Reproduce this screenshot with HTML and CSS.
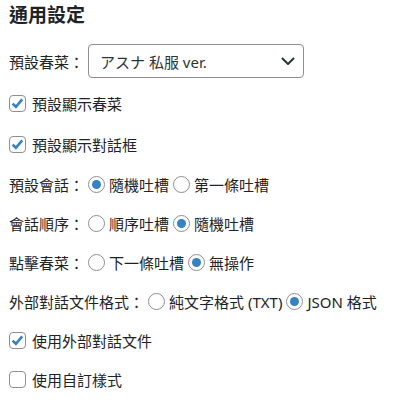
FILE: index.html
```html
<!DOCTYPE html>
<html lang="zh-Hant">
<head>
  <meta charset="UTF-8">
  <title>通用設定</title>
  <link rel="stylesheet" href="styles.css">
</head>
<body>

  <h2>通用設定</h2>

  <div class="fila fila-select">
    <span class="etiqueta">預設春菜：</span>
    <div class="select">
      <span>アスナ 私服 ver.</span>
      <svg class="flecha" width="14" height="8" viewBox="0 0 14 8"><polyline points="1,1 7,7 13,1" fill="none" stroke="#2c3338" stroke-width="2"/></svg>
    </div>
  </div>

  <div class="fila alta">
    <span class="check on"><svg width="17" height="17" viewBox="0 0 17 17"><polyline points="3.6,8.6 6.9,11.8 13.2,4.4" fill="none" stroke="#3582c4" stroke-width="2.6"/></svg></span>
    <span>預設顯示春菜</span>
  </div>

  <div class="fila alta">
    <span class="check on"><svg width="17" height="17" viewBox="0 0 17 17"><polyline points="3.6,8.6 6.9,11.8 13.2,4.4" fill="none" stroke="#3582c4" stroke-width="2.6"/></svg></span>
    <span>預設顯示對話框</span>
  </div>

  <div class="fila">
    <span class="etiqueta">預設會話：</span>
    <span class="radio on"></span><span class="opcion">隨機吐槽</span>
    <span class="radio"></span><span class="opcion">第一條吐槽</span>
  </div>

  <div class="fila">
    <span class="etiqueta">會話順序：</span>
    <span class="radio"></span><span class="opcion">順序吐槽</span>
    <span class="radio on"></span><span class="opcion">隨機吐槽</span>
  </div>

  <div class="fila">
    <span class="etiqueta">點擊春菜：</span>
    <span class="radio"></span><span class="opcion">下一條吐槽</span>
    <span class="radio on"></span><span class="opcion">無操作</span>
  </div>

  <div class="fila">
    <span class="etiqueta">外部對話文件格式：</span>
    <span class="radio"></span><span class="opcion">純文字格式 (TXT)</span>
    <span class="radio on"></span><span class="opcion">JSON 格式</span>
  </div>

  <div class="fila">
    <span class="check on"><svg width="17" height="17" viewBox="0 0 17 17"><polyline points="3.6,8.6 6.9,11.8 13.2,4.4" fill="none" stroke="#3582c4" stroke-width="2.6"/></svg></span>
    <span>使用外部對話文件</span>
  </div>

  <div class="fila">
    <span class="check"></span>
    <span>使用自訂樣式</span>
  </div>

</body>
</html>
```

FILE: styles.css
```css
body {
  margin: 0;
  padding: 0 9px;
  font-family: 'Noto Sans', 'Noto Sans CJK TC', sans-serif;
  font-size: 15px;
  color: #1d2327;
  background-color: #ffffff;
}

h2 {
  margin: 0;
  padding-top: 3px;
  height: 27px;
  line-height: 24px;
  font-size: 19px;
  font-weight: bold;
}

.fila {
  display: flex;
  align-items: center;
  height: 39px;
  white-space: nowrap;
}

.fila.alta {
  height: 41px;
}

.fila-select {
  height: 34px;
  margin-top: 14px;
  margin-bottom: 5px;
}

.etiqueta {
  margin-right: 4px;
}

.select {
  display: flex;
  align-items: center;
  justify-content: space-between;
  box-sizing: border-box;
  width: 216px;
  height: 34px;
  padding: 0 8px 0 11px;
  border: 1px solid #8c8f94;
  border-radius: 4px;
  font-size: 15px;
  color: #2c3338;
}

.check, .radio {
  display: inline-block;
  box-sizing: border-box;
  width: 17px;
  height: 17px;
  border: 1px solid #8c8f94;
  flex-shrink: 0;
  margin-right: 4px;
  background-color: #fff;
}

.check {
  border-radius: 4px;
  margin-right: 6px;
}

.check svg {
  display: block;
  margin: -1px;
}

.radio {
  border-radius: 50%;
  position: relative;
}

.radio.on::before {
  content: "";
  position: absolute;
  left: 3px;
  top: 3px;
  width: 9px;
  height: 9px;
  border-radius: 50%;
  background-color: #3582c4;
}

.opcion {
  margin-right: 4px;
}
```
